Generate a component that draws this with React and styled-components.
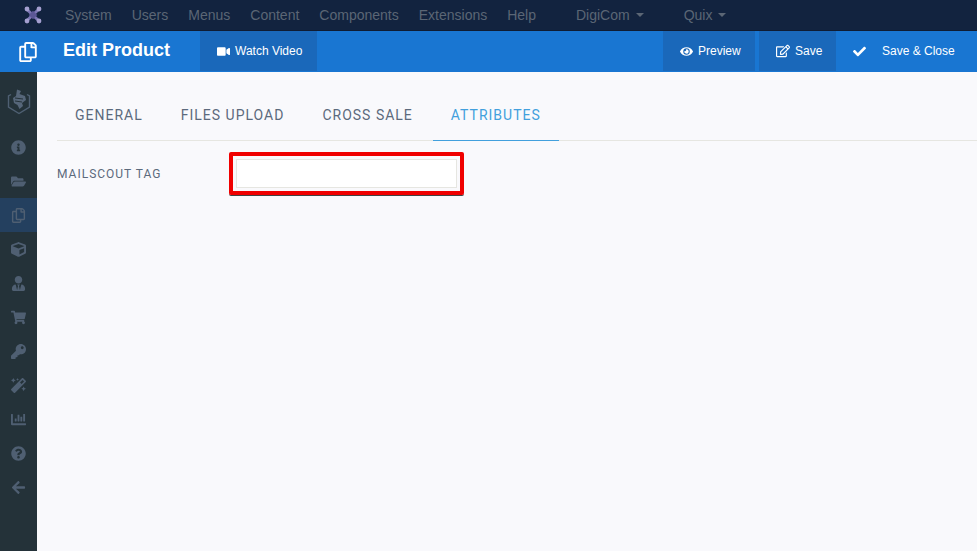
import React from "react";
import styled, { createGlobalStyle } from "styled-components";
import {
  FaVideo,
  FaEye,
  FaRegEdit,
  FaCheck,
  FaRegCopy,
  FaInfoCircle,
  FaFolderOpen,
  FaCube,
  FaUserTie,
  FaShoppingCart,
  FaKey,
  FaMagic,
  FaChartBar,
  FaQuestionCircle,
  FaArrowLeft,
} from "react-icons/fa";

const GlobalStyle = createGlobalStyle`
  html, body {
    margin: 0;
    padding: 0;
    height: 100%;
    background: #f9f9fc;
    font-family: "Liberation Sans", Arial, sans-serif;
    overflow: hidden;
  }
`;

const navItems = [
  { label: "System" },
  { label: "Users" },
  { label: "Menus" },
  { label: "Content" },
  { label: "Components" },
  { label: "Extensions" },
  { label: "Help" },
  { label: "DigiCom", caret: true, gap: 20 },
  { label: "Quix", caret: true, gap: 20 },
];

const sideItems = [
  { Icon: FaInfoCircle },
  { Icon: FaFolderOpen },
  { Icon: FaRegCopy, active: true },
  { Icon: FaCube },
  { Icon: FaUserTie },
  { Icon: FaShoppingCart },
  { Icon: FaKey },
  { Icon: FaMagic },
  { Icon: FaChartBar },
  { Icon: FaQuestionCircle },
  { Icon: FaArrowLeft },
];

const tabs = ["General", "Files Upload", "Cross Sale", "Attributes"];

const JoomlaLogo = () => (
  <svg width="18" height="18" viewBox="0 0 18 18">
    <g fill="none" stroke="#7d77b5" strokeWidth="3" strokeLinecap="round">
      <path d="M3 3.5 L14.5 14.5" />
      <path d="M14.5 3.5 L3 14.5" />
    </g>
    <g fill="#a49fd0">
      <circle cx="3" cy="3" r="2.4" />
      <circle cx="15" cy="3" r="2.4" />
      <circle cx="3" cy="15" r="2.4" />
      <circle cx="15" cy="15" r="2.4" />
    </g>
    <rect x="6" y="6" width="6" height="6" fill="#5b5796" transform="rotate(45 9 9)" />
  </svg>
);

const BrandMark = () => (
  <svg width="24" height="27" viewBox="0 0 24 27">
    <path
      d="M4 6.5 L1.5 8 V19 L12 25.5 L22.5 19 V8 L20 6.5"
      fill="none"
      stroke="#4f6073"
      strokeWidth="1.4"
    />
    <path
      d="M10 1.5 L14 3 L12.5 6 L18 8 L19 12 L15 15 L16 18 L12.5 21 L10.5 17 L7 15 L6 10 L9 8 Z"
      fill="#566679"
    />
    <path d="M8 10 L16 11 M8 13 L15 14" stroke="#243239" strokeWidth="1" />
  </svg>
);

const App = () => (
  <Page>
    <GlobalStyle />
    <TopNav>
      <LogoSlot>
        <JoomlaLogo />
      </LogoSlot>
      {navItems.map((item) => (
        <NavItem key={item.label} $gap={item.gap}>
          {item.label}
          {item.caret && <Caret />}
        </NavItem>
      ))}
    </TopNav>
    <Toolbar>
      <PageIcon>
        <FaRegCopy />
      </PageIcon>
      <Title>Edit Product</Title>
      <ToolButton $dark $width={117}>
        <FaVideo size={13} />
        Watch Video
      </ToolButton>
      <ToolbarRight>
        <ToolButton $dark $width={92}>
          <FaEye size={13} />
          Preview
        </ToolButton>
        <ToolButton $dark $width={77}>
          <FaRegEdit size={14} />
          Save
        </ToolButton>
        <ToolButton $width={141} $gap={16}>
          <FaCheck size={13} />
          Save &amp; Close
        </ToolButton>
      </ToolbarRight>
    </Toolbar>
    <Body>
      <Sidebar>
        <BrandSlot>
          <BrandMark />
        </BrandSlot>
        {sideItems.map(({ Icon, active }, i) => (
          <SideItem key={i} $active={active}>
            <Icon size={15} />
          </SideItem>
        ))}
      </Sidebar>
      <Main>
        <TabBar>
          {tabs.map((tab) => (
            <Tab key={tab} $active={tab === "Attributes"}>
              {tab}
            </Tab>
          ))}
        </TabBar>
        <FieldRow>
          <FieldLabel>Mailscout Tag</FieldLabel>
          <Highlight>
            <FieldInput type="text" />
          </Highlight>
        </FieldRow>
      </Main>
    </Body>
  </Page>
);

export default App;

const Page = styled.div`
  width: 977px;
  height: 551px;
  display: flex;
  flex-direction: column;
  overflow: hidden;
`;

const TopNav = styled.nav`
  height: 31px;
  flex: none;
  display: flex;
  align-items: center;
  background: #12233f;
  box-sizing: border-box;
  border-bottom: 1px solid #0f1c33;
`;

const LogoSlot = styled.div`
  width: 55px;
  padding-left: 24px;
  box-sizing: border-box;
  display: flex;
  align-items: center;
`;

const NavItem = styled.div`
  padding: 0 10px;
  margin-left: ${(p) => p.$gap || 0}px;
  font-size: 14px;
  color: #5b6675;
  display: flex;
  align-items: center;
`;

const Caret = styled.span`
  margin-left: 6px;
  border-left: 4px solid transparent;
  border-right: 4px solid transparent;
  border-top: 4px solid #5b6675;
`;

const Toolbar = styled.header`
  height: 41px;
  flex: none;
  display: flex;
  background: #1976d2;
  color: #fff;
`;

const PageIcon = styled.div`
  width: 63px;
  padding-left: 18px;
  box-sizing: border-box;
  display: flex;
  align-items: center;
  font-size: 20px;
`;

const Title = styled.h1`
  margin: 0;
  width: 137px;
  font-size: 18px;
  font-weight: 700;
  line-height: 39px;
`;

const ToolButton = styled.div`
  width: ${(p) => p.$width}px;
  height: 40px;
  box-sizing: border-box;
  padding-left: 17px;
  display: flex;
  align-items: center;
  gap: ${(p) => p.$gap || 5}px;
  font-size: 12px;
  background: ${(p) => (p.$dark ? "#1a68ba" : "transparent")};
`;

const ToolbarRight = styled.div`
  margin-left: auto;
  display: flex;

  & > :nth-child(1) {
    margin-right: 4px;
  }
`;

const Body = styled.div`
  flex: 1;
  display: flex;
  min-height: 0;
`;

const Sidebar = styled.aside`
  width: 37px;
  flex: none;
  background: #243239;
  color: #4f5f72;
`;

const BrandSlot = styled.div`
  height: 58px;
  padding-top: 1px;
  box-sizing: border-box;
  display: flex;
  align-items: center;
  justify-content: center;
`;

const SideItem = styled.div`
  height: 34px;
  display: flex;
  align-items: center;
  justify-content: center;
  background: ${(p) => (p.$active ? "#24405f" : "transparent")};
`;

const Main = styled.main`
  flex: 1;
  padding: 20px 0 0 20px;
  background: #f9f9fc;
`;

const TabBar = styled.div`
  display: flex;
  height: 49px;
  box-sizing: border-box;
  border-bottom: 1px solid #e6e6e1;
`;

const Tab = styled.div`
  height: 49px;
  box-sizing: border-box;
  padding: 15px 18px 0;
  margin-right: 2px;
  font-family: Roboto, sans-serif;
  font-size: 14px;
  line-height: 16px;
  letter-spacing: 1px;
  text-transform: uppercase;
  color: ${(p) => (p.$active ? "#42a0dd" : "#5c6a7c")};
  border-bottom: 1px solid ${(p) => (p.$active ? "#42a0dd" : "transparent")};
`;

const FieldRow = styled.div`
  display: flex;
  align-items: center;
  margin-top: 11px;
`;

const FieldLabel = styled.label`
  width: 172px;
  font-family: Roboto, sans-serif;
  font-size: 12px;
  letter-spacing: 1px;
  text-transform: uppercase;
  color: #5c6a7c;
`;

const Highlight = styled.div`
  width: 235px;
  height: 43px;
  box-sizing: border-box;
  border: 4px solid #f00000;
  border-radius: 2px;
  box-shadow: 0 1px 0 #444;
  padding: 3px;
  display: flex;
`;

const FieldInput = styled.input`
  flex: 1;
  width: 100%;
  min-width: 0;
  box-sizing: border-box;
  border: 1px solid #e6e6e1;
  background: #fff;
  padding: 0;
  outline: none;
`;
